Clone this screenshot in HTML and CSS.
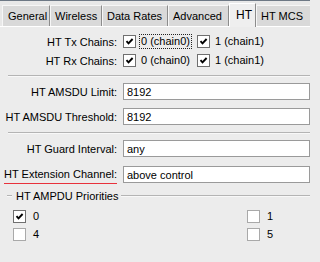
FILE: index.html
```html
<!DOCTYPE html>
<html>
<head>
<meta charset="utf-8">
<link rel="stylesheet" href="styles.css">
</head>
<body>
<div class="win">
  <div class="tabs">
    <div class="tab t-general">General</div>
    <div class="tab t-wireless">Wireless</div>
    <div class="tab t-rates">Data Rates</div>
    <div class="tab t-adv">Advanced</div>
    <div class="tab active t-ht">HT</div>
    <div class="tab t-mcs">HT MCS</div>
  </div>
  <div class="content">
    <div class="chains">
      <div class="row crow">
        <div class="label">HT Tx Chains:</div>
        <div class="ctrl">
          <span class="cbitem first"><span class="cb checked"><svg viewBox="0 0 11 11" width="11" height="11"><path d="M2.5 5.2 L4.5 7.3 L8.6 3" fill="none" stroke="#000" stroke-width="1.9"/></svg></span><span class="cbtext focus">0 (chain0)</span></span>
          <span class="cbitem"><span class="cb checked"><svg viewBox="0 0 11 11" width="11" height="11"><path d="M2.5 5.2 L4.5 7.3 L8.6 3" fill="none" stroke="#000" stroke-width="1.9"/></svg></span><span class="cbtext">1 (chain1)</span></span>
        </div>
      </div>
      <div class="row crow">
        <div class="label">HT Rx Chains:</div>
        <div class="ctrl">
          <span class="cbitem first"><span class="cb checked"><svg viewBox="0 0 11 11" width="11" height="11"><path d="M2.5 5.2 L4.5 7.3 L8.6 3" fill="none" stroke="#000" stroke-width="1.9"/></svg></span><span class="cbtext">0 (chain0)</span></span>
          <span class="cbitem"><span class="cb checked"><svg viewBox="0 0 11 11" width="11" height="11"><path d="M2.5 5.2 L4.5 7.3 L8.6 3" fill="none" stroke="#000" stroke-width="1.9"/></svg></span><span class="cbtext">1 (chain1)</span></span>
        </div>
      </div>
    </div>
    <div class="sep s1"></div>
    <div class="row irow r-limit">
      <div class="label">HT AMSDU Limit:</div>
      <div class="ctrl"><div class="input">8192</div></div>
    </div>
    <div class="row irow r-thr">
      <div class="label">HT AMSDU Threshold:</div>
      <div class="ctrl"><div class="input">8192</div></div>
    </div>
    <div class="sep s2"></div>
    <div class="row irow r-guard">
      <div class="label">HT Guard Interval:</div>
      <div class="ctrl"><div class="input">any</div></div>
    </div>
    <div class="row irow r-ext">
      <div class="label"><span class="uline">HT Extension Channel:</span></div>
      <div class="ctrl"><div class="input">above control</div></div>
    </div>
    <div class="group">
      <div class="gtitle"><span class="gl-short"></span><span class="gtext">HT AMPDU Priorities</span><span class="gl-long"></span></div>
      <div class="ggrid">
        <span class="cbitem"><span class="cb checked"><svg viewBox="0 0 11 11" width="11" height="11"><path d="M2.5 5.2 L4.5 7.3 L8.6 3" fill="none" stroke="#000" stroke-width="1.9"/></svg></span><span class="cbtext">0</span></span>
        <span class="cbitem"><span class="cb light"></span><span class="cbtext">1</span></span>
        <span class="cbitem"><span class="cb light"></span><span class="cbtext">4</span></span>
        <span class="cbitem"><span class="cb light"></span><span class="cbtext">5</span></span>
      </div>
    </div>
  </div>
</div>
</body>
</html>
```

FILE: styles.css
```css
html, body {
  margin: 0;
  padding: 0;
  background: #ececec;
}
body {
  width: 310px;
  height: 262px;
  overflow: hidden;
  font-family: "Liberation Sans", Arial, sans-serif;
  font-size: 11px;
  color: #000;
}
.win {
  border-top: 1px solid #6d7885;
  height: 261px;
  overflow: hidden;
}
.tabs {
  display: flex;
  height: 23px;
  padding-top: 2px;
  background: #e8e8e8;
  border-bottom: 1px solid #ffffff;
  box-sizing: content-box;
  align-items: flex-end;
  white-space: nowrap;
}
.tab {
  height: 21px;
  box-sizing: border-box;
  background: #d9d9d9;
  border-top: 1px solid #f6f6f6;
  border-left: 1px solid #f6f6f6;
  border-right: 1px solid #8c8c8c;
  display: flex;
  align-items: center;
  font-size: 11px;
  padding: 0 0 0 6px;
  flex: none;
}
.t-general { width: 48px; margin-left: 2px; padding-left: 5px; }
.t-wireless { width: 52px; padding-left: 4px; }
.t-rates { width: 66px; padding-left: 4px; }
.t-adv { width: 61px; padding-left: 4px; }
.t-ht {
  width: 27px;
  padding-left: 6px;
}
.t-mcs { width: 56px; padding-left: 4px; }
.tab.active {
  height: 24px;
  background: #efefef;
  margin-bottom: -1px;
  padding-bottom: 2px;
  border-top: 1px solid #ffffff;
  border-left: 1px solid #ffffff;
  font-size: 12px;
}
.content {
  background: #ececec;
}
.chains {
  padding-top: 5px;
}
.row {
  display: grid;
  grid-template-columns: 120px 1fr;
  column-gap: 3px;
  align-items: center;
}
.label {
  text-align: right;
  padding-right: 3px;
  white-space: nowrap;
  font-size: 11px;
}
.crow {
  height: 19px;
}
.ctrl {
  display: flex;
  align-items: center;
  min-width: 0;
  white-space: nowrap;
}
.cbitem {
  display: flex;
  align-items: center;
  font-size: 11px;
  white-space: nowrap;
}
.cbitem.first {
  width: 74px;
}
.cb {
  width: 13px;
  height: 13px;
  box-sizing: border-box;
  border: 1px solid #6f6f6f;
  background: #fff;
  display: flex;
  align-items: center;
  justify-content: center;
  flex: none;
}
.cb.light {
  border-color: #a9a9a9;
}
.cb svg {
  display: block;
}
.cbtext {
  margin-left: 3px;
  border: 1px solid transparent;
  padding: 0 1px;
  line-height: 13px;
  white-space: nowrap;
}
.cbtext.focus {
  border: 1px dotted #222;
}
.sep {
  margin-left: 8px;
  height: 0;
  border-top: 1px solid #b4b4b4;
  border-bottom: 1px solid #f8f8f8;
}
.s1 { margin-top: 5px; }
.s2 { margin-top: 7px; }
.irow {
  height: 17px;
}
.r-limit { margin-top: 6px; }
.r-thr { margin-top: 8px; }
.r-guard { margin-top: 6px; }
.r-ext { margin-top: 9px; }
.input {
  height: 17px;
  box-sizing: border-box;
  width: calc(100% + 10px);
  background: #fff;
  border: 1px solid #9a9a9a;
  padding-left: 3px;
  display: flex;
  align-items: center;
  font-size: 11px;
  white-space: nowrap;
}
.uline {
  display: inline-block;
  border-bottom: 1px solid #e8323c;
  padding-bottom: 2px;
  margin-bottom: -3px;
  line-height: 13px;
}
.group {
  margin-top: 6px;
}
.gtitle {
  display: flex;
  align-items: center;
  height: 14px;
}
.gl-short {
  margin-left: 7px;
  width: 5px;
  border-top: 1px solid #b4b4b4;
  border-bottom: 1px solid #f8f8f8;
}
.gl-long {
  flex: 1;
  border-top: 1px solid #b4b4b4;
  border-bottom: 1px solid #f8f8f8;
}
.gtext {
  padding: 0 3px 0 4px;
  font-size: 11px;
  white-space: nowrap;
}
.ggrid {
  display: grid;
  grid-template-columns: 234px 1fr;
  grid-auto-rows: 18px;
  padding-left: 13px;
  padding-top: 4px;
  align-items: center;
}
.ggrid .cbtext {
  margin-left: 5px;
}
```
